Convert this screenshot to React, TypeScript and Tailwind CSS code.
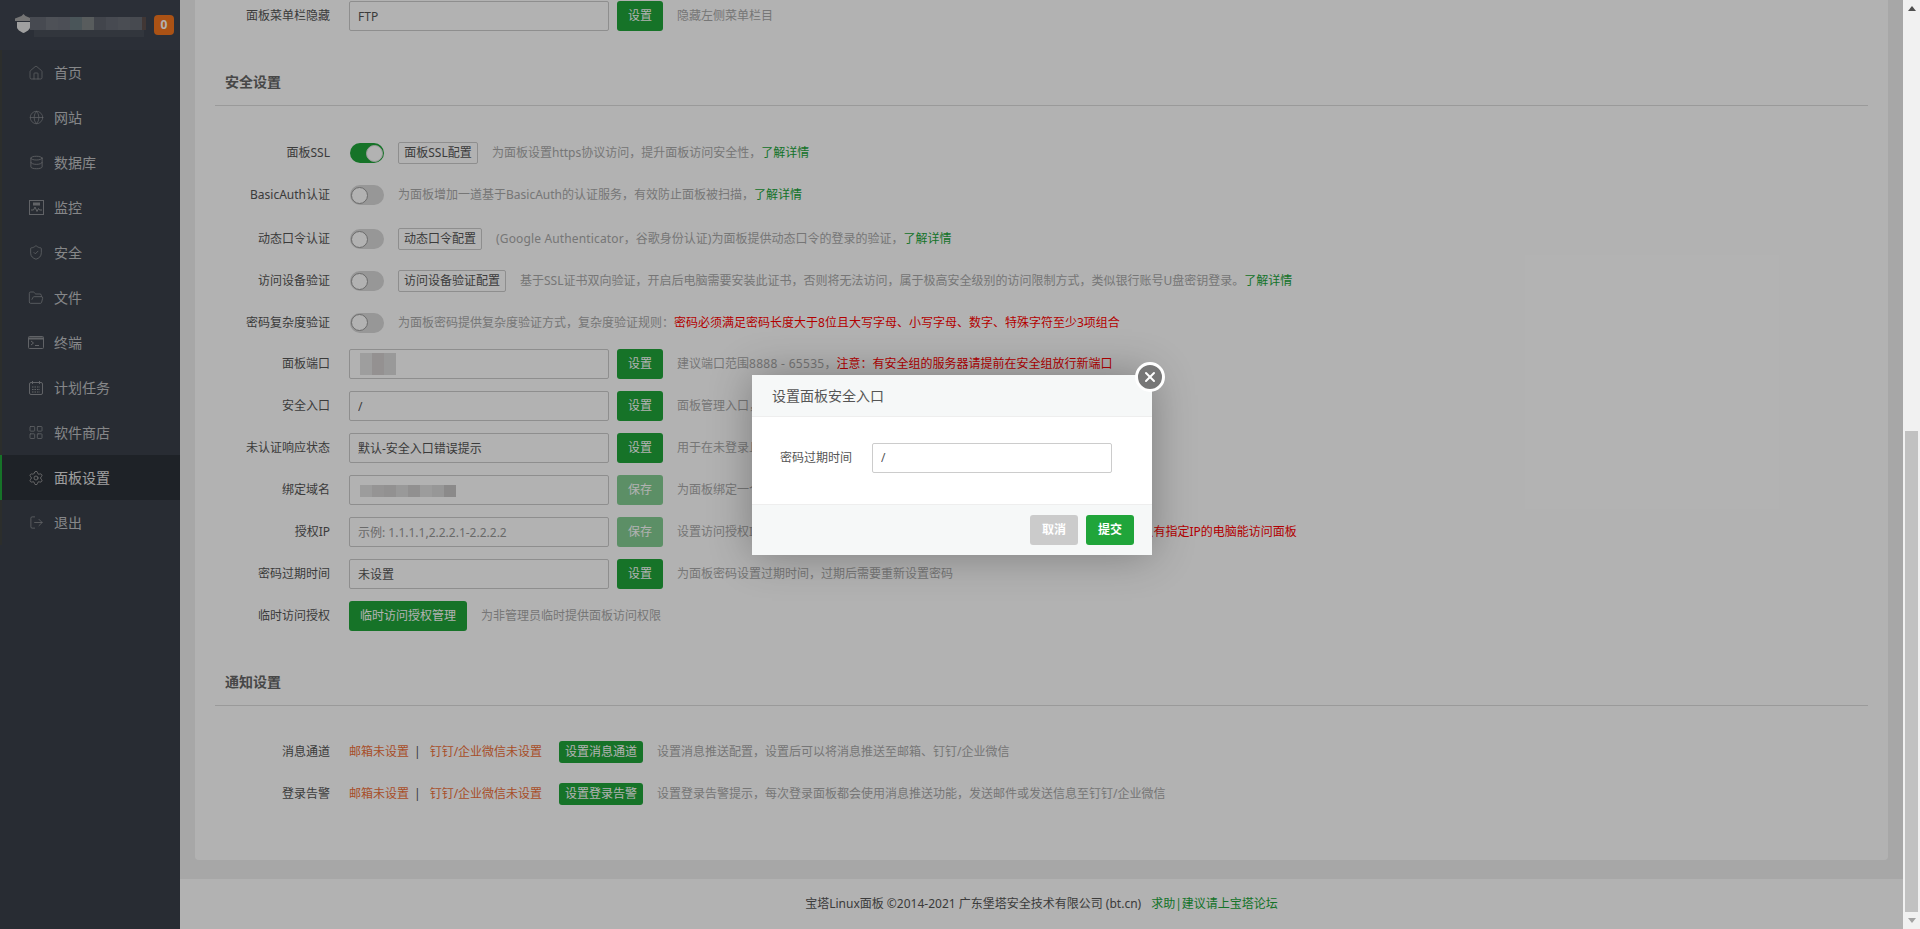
import { Database, FolderOpen, Globe, House, LayoutGrid, LogOut, Settings, ShieldCheck, X } from 'lucide-react'
import type { ReactNode } from 'react'

const font = "font-['Noto_Sans','Noto_Sans_CJK_SC',sans-serif]"

function MonitorIcon() {
  return (
    <svg width="15" height="15" viewBox="0 0 15 15" fill="none" stroke="currentColor">
      <rect x="0.5" y="0.5" width="14" height="14" />
      <rect x="4" y="2.5" width="7" height="3" fill="currentColor" stroke="none" />
      <path d="M2 10h2.5l1.5-3 2 4.5 1.5-3 1 1.5H13" />
    </svg>
  )
}

function TerminalIcon() {
  return (
    <svg width="16" height="13" viewBox="0 0 16 13" fill="none" stroke="currentColor">
      <rect x="0.5" y="0.5" width="15" height="12" rx="1" />
      <path d="M1 2.5h14" strokeWidth="2" />
      <path d="M3 5l2.5 2L3 9M7 9.5h4" />
    </svg>
  )
}

function CalendarIcon() {
  return (
    <svg width="14" height="14" viewBox="0 0 14 14" fill="none" stroke="currentColor">
      <rect x="0.5" y="1.5" width="13" height="12" rx="1.5" />
      <path d="M3.5 0v3M10.5 0v3" />
      <path d="M3 6h8M3 8.5h8M3 11h8" strokeDasharray="1.5 1" />
    </svg>
  )
}

const menu: { name: string; icon: ReactNode; active?: boolean }[] = [
  { name: '首页', icon: <House size={16} strokeWidth={1.1} /> },
  { name: '网站', icon: <Globe size={15} strokeWidth={1.1} /> },
  { name: '数据库', icon: <Database size={15} strokeWidth={1.3} /> },
  { name: '监控', icon: <MonitorIcon /> },
  { name: '安全', icon: <ShieldCheck size={17} strokeWidth={1.2} /> },
  { name: '文件', icon: <FolderOpen size={16} strokeWidth={1.2} /> },
  { name: '终端', icon: <TerminalIcon /> },
  { name: '计划任务', icon: <CalendarIcon /> },
  { name: '软件商店', icon: <LayoutGrid size={17} strokeWidth={1.2} /> },
  { name: '面板设置', icon: <Settings size={16} strokeWidth={1.2} />, active: true },
  { name: '退出', icon: <LogOut size={15} strokeWidth={1.3} /> },
]

function Sidebar() {
  return (
    <nav className="w-[180px] h-full shrink-0 bg-[#3a4049]">
      <div className="h-[50px] bg-[#3e444f] flex items-center pl-[15px]">
        <svg width="17" height="19" viewBox="0 0 17 19" className="shrink-0 mt-[-4px]">
          <path d="M8.5 0l2 2 6 2.5V7H0V4.500l6.500-2.500z" fill="#a8a8a8" />
          <path d="M2 8h13v5c0 2.500-3 4.500-6.500 6C5 17.500 2 15.500 2 13z" fill="#e6e6e6" />
        </svg>
        <div className="w-[118px] ml-[-2px] mt-[4px] flex flex-col">
          <div className="h-[13px] flex">
            <div className="w-[16px] bg-[#666b74]" />
            <div className="w-[12px] bg-[#70757d]" />
            <div className="w-[12px] bg-[#6d727b]" />
            <div className="w-[12px] bg-[#6b7a80]" />
            <div className="w-[12px] bg-[#7f8486]" />
            <div className="w-[12px] bg-[#5f646d]" />
            <div className="w-[12px] bg-[#666b74]" />
            <div className="w-[12px] bg-[#6a6f78]" />
            <div className="w-[12px] bg-[#666b73]" />
            <div className="w-[4px] bg-[#5d4f4d]" />
          </div>
          <div className="h-[7px] ml-[4px] mr-[4px] bg-[#484e58]" />
        </div>
        <div className="w-[20px] h-[20px] ml-[6px] rounded-[4px] bg-[#f5761f] text-white text-[12px] font-bold flex items-center justify-center">0</div>
      </div>
      {menu.map((m) => (
        <div
          key={m.name}
          className={
            m.active
              ? 'h-[45px] flex items-center border-l-2 border-[#20a53a] bg-[#2c3138] text-[#e4e4e4]'
              : 'h-[45px] flex items-center border-l-2 border-[#3f4240] text-[#c0c2c5]'
          }
        >
          <span className={m.active ? 'w-[16px] ml-[26px] mr-[10px] flex justify-center text-[#a8a8a8]' : 'w-[16px] ml-[26px] mr-[10px] flex justify-center text-[#8c8f94]'}>
            {m.icon}
          </span>
          <span className="text-[14px]">{m.name}</span>
        </div>
      ))}
    </nav>
  )
}

function Row({ label, h = 'h-[42px]', children }: { label: string; h?: string; children: ReactNode }) {
  return (
    <div className={`${h} flex items-center text-[12px]`}>
      <label className="w-[115px] mr-[19px] text-right text-[#555] whitespace-nowrap">{label}</label>
      {children}
    </div>
  )
}

function Hint({ children }: { children: ReactNode }) {
  return <span className="ml-[14px] text-[#aaa] whitespace-nowrap">{children}</span>
}

function More() {
  return <span className="text-[#20a53a]">了解详情</span>
}

function Red({ children }: { children: ReactNode }) {
  return <span className="text-[#f00]">{children}</span>
}

function InputBtn({ value, placeholder, btn = '设置', off, hint, mosaic }: { value?: string; placeholder?: string; btn?: string; off?: boolean; hint: ReactNode; mosaic?: ReactNode }) {
  return (
    <>
      <div className="relative w-[260px] h-[30px] shrink-0">
        <input
          readOnly
          value={value ?? ''}
          placeholder={placeholder}
          className="w-full h-full border border-[#ccc] rounded-[2px] px-[8px] text-[12px] text-[#555] placeholder:text-[#999] outline-none"
        />
        {mosaic}
      </div>
      <button className={off ? 'w-[46px] h-[30px] ml-[8px] rounded-[3px] bg-[#20a53a] text-white opacity-55 shrink-0' : 'w-[46px] h-[30px] ml-[8px] rounded-[3px] bg-[#20a53a] text-white shrink-0'}>{btn}</button>
      <Hint>{hint}</Hint>
    </>
  )
}

function Toggle({ on }: { on?: boolean }) {
  return (
    <span className={on ? 'ml-px w-[34px] h-[20px] rounded-full bg-[#20a53a] flex items-center justify-end pr-[1px] shrink-0' : 'ml-px w-[34px] h-[20px] rounded-full bg-[#d8d8d8] flex items-center pl-[1px] shrink-0'}>
      <span className={on ? 'w-[17px] h-[17px] rounded-full bg-white border border-[#ddd]' : 'w-[17px] h-[17px] rounded-full bg-white border border-[#999]'} />
    </span>
  )
}

function ConfigBtn({ w, children }: { w: string; children: ReactNode }) {
  return <button className={`${w} ml-[14px] h-[22px] border border-[#ccc] rounded-[2px] bg-white text-[#555] whitespace-nowrap shrink-0`}>{children}</button>
}

function SectionTitle({ children, mt }: { children: ReactNode; mt: string }) {
  return <div className={`${mt} h-[39px] pl-[10px] pb-[8px] leading-[30px] border-b border-[#ddd] text-[14px] font-bold text-[#666]`}>{children}</div>
}

function NotifyRow({ label, btn, hint }: { label: string; btn: string; hint: string }) {
  return (
    <Row label={label}>
      <span className="text-[#f0703a] whitespace-nowrap">邮箱未设置</span>
      <span className="ml-[5px] mr-[9px] text-[#555]">|</span>
      <span className="text-[#f0703a] whitespace-nowrap">钉钉/企业微信未设置</span>
      <button className="ml-[17px] w-[84px] h-[22px] rounded-[3px] bg-[#20a53a] text-white shrink-0">{btn}</button>
      <Hint>{hint}</Hint>
    </Row>
  )
}

function Dialog() {
  return (
    <div className="absolute left-[752px] top-[375px] w-[400px] h-[180px] bg-white shadow-[0_0_40px_rgba(0,0,0,0.3)] flex flex-col text-[12px]">
      <div className="h-[42px] bg-[#f6f8f8] border-b border-[#eee] flex items-center pl-[20px] text-[14px] text-[#555]">设置面板安全入口</div>
      <div className="h-[87px] flex items-center pl-[28px] pb-[6px]">
        <label className="w-[72px] mr-[20px] text-right text-[#555]">密码过期时间</label>
        <input readOnly value="/" className="w-[240px] h-[30px] border border-[#ccc] rounded-[2px] px-[8px] text-[#555] outline-none" />
      </div>
      <div className="flex-1 bg-[#f6f8f8] border-t border-[#eee] flex items-center justify-end gap-[8px] pr-[18px]">
        <button className="w-[48px] h-[30px] rounded-[3px] bg-[#cbcbcb] text-white font-bold">取消</button>
        <button className="w-[48px] h-[30px] rounded-[3px] bg-[#20a53a] text-white font-bold">提交</button>
      </div>
      <span className="absolute right-[-13px] top-[-13px] w-[30px] h-[30px] rounded-full bg-[#777] border-[3px] border-white text-white flex items-center justify-center">
        <X size={16} strokeWidth={3} />
      </span>
    </div>
  )
}

export default function App() {
  return (
    <div className={`${font} w-full h-[929px] overflow-hidden flex relative`}>
      <div className="flex-1 h-full flex relative min-w-0">
        <Sidebar />
        <main className="flex-1 min-w-0 bg-[#f0f0f0] flex flex-col">
          <div className="flex-1 mx-[15px] mb-[19px] px-[20px] pt-px bg-white rounded-b text-[12px]">
            <Row label="面板菜单栏隐藏" h="h-[30px]">
              <InputBtn value="FTP" hint="隐藏左侧菜单栏目" />
            </Row>
            <SectionTitle mt="mt-[36px]">安全设置</SectionTitle>
            <div className="mt-[26px]">
              <Row label="面板SSL">
                <Toggle on />
                <ConfigBtn w="w-[80px]">面板SSL配置</ConfigBtn>
                <Hint>为面板设置https协议访问，提升面板访问安全性，<More /></Hint>
              </Row>
              <Row label="BasicAuth认证">
                <Toggle />
                <Hint>为面板增加一道基于BasicAuth的认证服务，有效防止面板被扫描，<More /></Hint>
              </Row>
              <div className="mt-[2px]">
                <Row label="动态口令认证">
                  <Toggle />
                  <ConfigBtn w="w-[84px]">动态口令配置</ConfigBtn>
                  <Hint><span className="tracking-[0.15px]">(Google Authenticator</span>，谷歌身份认证)为面板提供动态口令的登录的验证，<More /></Hint>
                </Row>
              </div>
              <Row label="访问设备验证">
                <Toggle />
                <ConfigBtn w="w-[108px]">访问设备验证配置</ConfigBtn>
                <Hint>基于SSL证书双向验证，开启后电脑需要安装此证书，否则将无法访问，属于极高安全级别的访问限制方式，类似银行账号U盘密钥登录。<More /></Hint>
              </Row>
              <Row label="密码复杂度验证" h="h-[41px]">
                <Toggle />
                <Hint>为面板密码提供复杂度验证方式，复杂度验证规则：<Red>密码必须满足密码长度大于8位且大写字母、小写字母、数字、特殊字符至少3项组合</Red></Hint>
              </Row>
              <Row label="面板端口">
                <InputBtn
                  hint={<>建议端口范围<span className="tracking-[0.3px]">8888 - 65535</span>，<Red>注意：有安全组的服务器请提前在安全组放行新端口</Red></>}
                  mosaic={
                    <div className="absolute left-[11px] top-[4px] flex h-[22px]">
                      <div className="w-[12px] bg-[#e2e2e2]" />
                      <div className="w-[12px] bg-[#d4d0d0]" />
                      <div className="w-[12px] bg-[#dcdcdc]" />
                    </div>
                  }
                />
              </Row>
              <Row label="安全入口">
                <InputBtn value="/" hint="面板管理入口，设置后只能通过指定安全入口登录面板,如: /bt" />
              </Row>
              <Row label="未认证响应状态">
                <InputBtn value="默认-安全入口错误提示" hint="用于在未登录且安全入口错误时的响应提示，用于隐藏面板特征" />
              </Row>
              <Row label="绑定域名">
                <InputBtn
                  btn="保存"
                  off
                  hint="为面板绑定一个访问域名，注意：一旦绑定域名，只能通过域名访问面板！"
                  mosaic={
                    <div className="absolute left-[11px] top-[10px] flex h-[12px]">
                      <div className="w-[12px] bg-[#e0e0e0]" />
                      <div className="w-[12px] bg-[#d6d4d4]" />
                      <div className="w-[12px] bg-[#d2d0d0]" />
                      <div className="w-[12px] bg-[#dcdcdc]" />
                      <div className="w-[12px] bg-[#d0cece]" />
                      <div className="w-[12px] bg-[#e0e0e0]" />
                      <div className="w-[12px] bg-[#d8d8d8]" />
                      <div className="w-[12px] bg-[#c8c6c6]" />
                    </div>
                  }
                />
              </Row>
              <Row label="授权IP">
                <InputBtn btn="保存" off placeholder="示例: 1.1.1.1,2.2.2.1-2.2.2.2" hint={<>设置访问授权IP，可设置多个授权IP，多个请使用逗号(,)隔开，<Red>注意：一旦设置授权IP，只有指定IP的电脑能访问面板</Red></>} />
              </Row>
              <Row label="密码过期时间">
                <InputBtn value="未设置" hint="为面板密码设置过期时间，过期后需要重新设置密码" />
              </Row>
              <Row label="临时访问授权">
                <button className="w-[118px] h-[30px] rounded-[3px] bg-[#20a53a] text-white shrink-0">临时访问授权管理</button>
                <Hint>为非管理员临时提供面板访问权限</Hint>
              </Row>
            </div>
            <SectionTitle mt="mt-[30px]">通知设置</SectionTitle>
            <div className="mt-[25px]">
              <NotifyRow label="消息通道" btn="设置消息通道" hint="设置消息推送配置，设置后可以将消息推送至邮箱、钉钉/企业微信" />
              <NotifyRow label="登录告警" btn="设置登录告警" hint="设置登录告警提示，每次登录面板都会使用消息推送功能，发送邮件或发送信息至钉钉/企业微信" />
            </div>
          </div>
          <footer className="h-[50px] shrink-0 bg-white flex items-center justify-center text-[12px] text-[#555]">
            宝塔Linux面板 ©2014-2021 广东堡塔安全技术有限公司 (bt.cn)
            <span className="ml-[10px] text-[#20a53a]">求助|建议请上宝塔论坛</span>
          </footer>
        </main>
        <div className="absolute inset-0 bg-black/30" />
      </div>
      <div className="w-[17px] h-full shrink-0 bg-[#f1f1f1] flex flex-col">
        <div className="h-[17px] flex items-center justify-center">
          <span className="border-x-[4px] border-b-[5px] border-x-transparent border-b-[#505050]" />
        </div>
        <div className="h-[414px]" />
        <div className="h-[481px] mx-[2px] bg-[#c1c1c1]" />
        <div className="h-[17px] flex items-center justify-center">
          <span className="border-x-[4px] border-t-[5px] border-x-transparent border-t-[#a3a3a3]" />
        </div>
      </div>
      <Dialog />
    </div>
  )
}
